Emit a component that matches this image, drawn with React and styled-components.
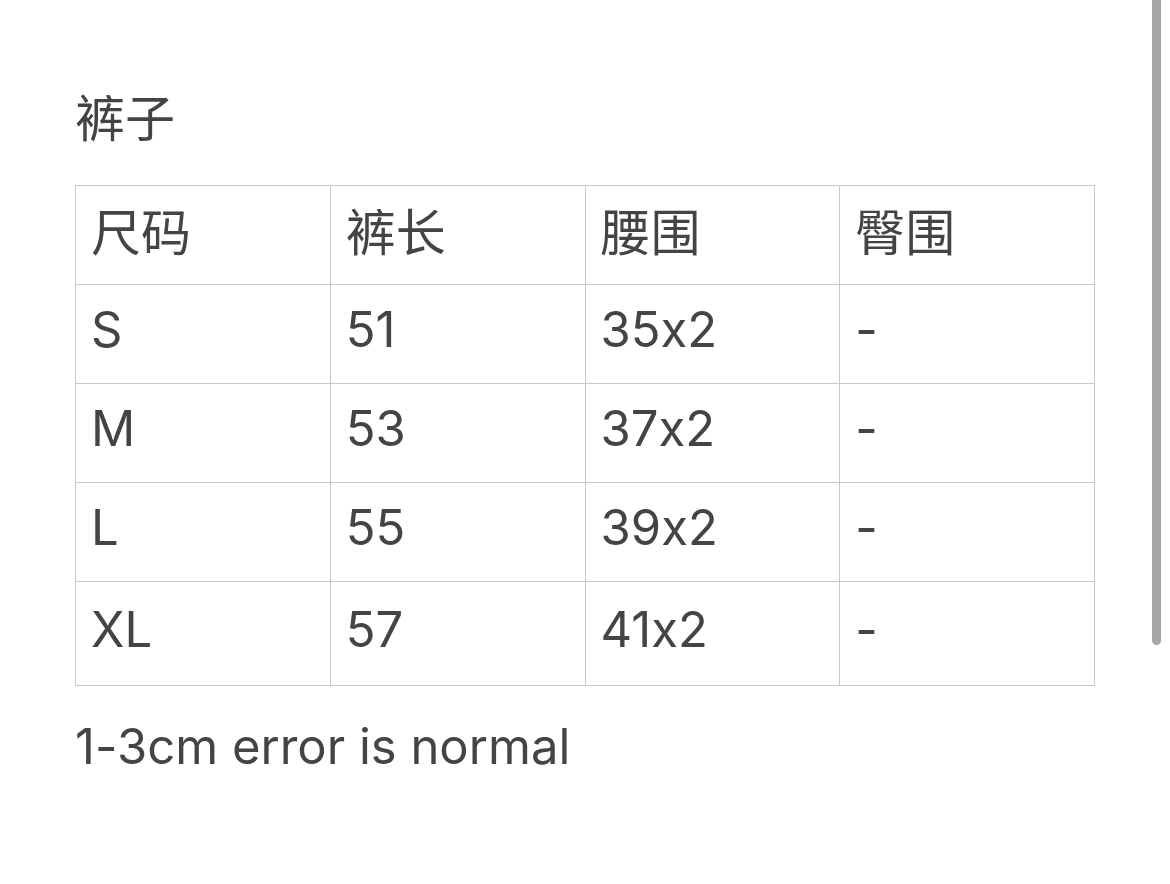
import styled, { createGlobalStyle } from 'styled-components';

const GlobalStyle = createGlobalStyle`
  html, body {
    margin: 0;
    padding: 0;
    background: #ffffff;
  }
  body {
    font-family: Inter, "Noto Sans CJK SC", sans-serif;
    font-feature-settings: "calt" 0;
    color: #444444;
  }
`;

const Page = styled.div`
  padding: 82px 75px 0 75px;
  height: 884px;
  box-sizing: border-box;
  overflow: hidden;
`;

const Title = styled.h2`
  margin: 0 0 37px 0;
  font-size: 50px;
  font-weight: 400;
  line-height: 66px;
  font-family: "Noto Sans CJK SC", sans-serif;
  color: #444444;
`;

const SizeTable = styled.table`
  width: 1020px;
  border-collapse: collapse;
  table-layout: fixed;
`;

const Row = styled.tr`
  height: ${(p) => (p.$last ? '104px' : '99px')};
`;

const Cell = styled.td`
  border: 1px solid #c8c8c8;
  padding: ${(p) => (p.$cjk ? '0 0 12px 15px' : '0 0 9px 15px')};
  font-size: ${(p) => (p.$cjk ? '50px' : '49px')};
  font-weight: 400;
  color: #444444;
  vertical-align: middle;
  font-family: ${(p) => (p.$cjk ? '"Noto Sans CJK SC", sans-serif' : 'Inter, "Noto Sans CJK SC", sans-serif')};
`;

const Note = styled.p`
  margin: 28px 0 0 0;
  font-size: 49px;
  line-height: 66px;
  color: #444444;
`;

const ScrollThumb = styled.div`
  position: fixed;
  top: -6px;
  right: 9px;
  width: 9px;
  height: 651px;
  border-radius: 5px;
  background: #a6a6a6;
`;

const header = ['尺码', '裤长', '腰围', '臀围'];
const rows = [
  ['S', '51', '35x2', '-'],
  ['M', '53', '37x2', '-'],
  ['L', '55', '39x2', '-'],
  ['XL', '57', '41x2', '-'],
];

export default function App() {
  return (
    <>
      <GlobalStyle />
      <Page>
        <Title>裤子</Title>
        <SizeTable>
          <tbody>
            <Row>
              {header.map((h) => (
                <Cell key={h} $cjk>{h}</Cell>
              ))}
            </Row>
            {rows.map((r, i) => (
              <Row key={r[0]} $last={i === rows.length - 1}>
                {r.map((c, j) => (
                  <Cell key={j}>{c}</Cell>
                ))}
              </Row>
            ))}
          </tbody>
        </SizeTable>
        <Note>1-3cm error is normal</Note>
      </Page>
      <ScrollThumb />
    </>
  );
}
